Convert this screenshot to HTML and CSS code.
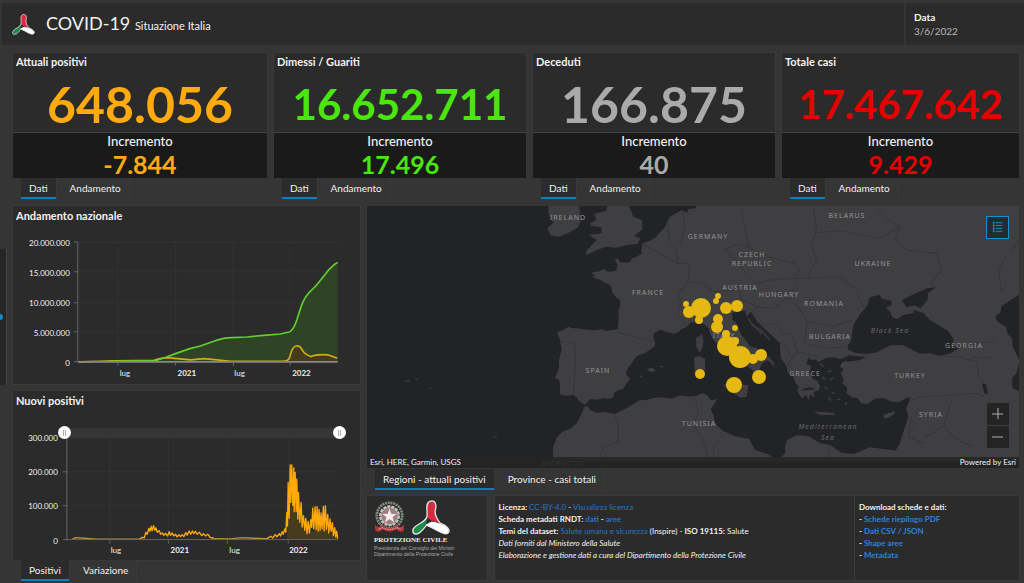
FILE: index.html
```html
<!DOCTYPE html>
<html lang="it">
<head>
<meta charset="utf-8">
<meta name="viewport" content="width=device-width, initial-scale=1">
<title>COVID-19 Situazione Italia</title>
<link rel="stylesheet" href="styles.css">
</head>
<body>
<svg class="defs" aria-hidden="true">
  <symbol id="tricolor" viewBox="0 0 114 106">
    <path d="M43 68C34 84 26 102 12 103C0 103-1 90 8 82C20 70 36 68 46 43Z" fill="#1c8a4b"/>
    <path d="M44 53C49 37 37 11 53 4C69-2 75 13 70 30C67 46 74 57 85 70L59 63Z" fill="#d62b40"/>
    <path d="M58 66C72 66 91 72 104 82C117 92 111 104 98 102C83 99 70 90 40 75Z" fill="#fff"/>
    <path d="M44 53C49 37 37 11 53 4C69-2 75 13 70 30C67 46 74 57 85 70C93 73 102 78 107 84C117 94 110 104 98 102C83 99 71 87 43 76C34 88 25 102 12 103C0 103-1 90 8 82C20 70 36 69 44 53Z" fill="none" stroke="#e4e4e4" stroke-width="4"/>
  </symbol>
</svg>

<header class="topbar">
  <div class="brand">
    <svg class="brand-logo" aria-hidden="true"><use href="#tricolor"/></svg>
    <h1 class="brand-title">COVID-19 <span class="brand-sub">Situazione Italia</span></h1>
  </div>
  <div class="date"><span class="date-label">Data</span><span class="date-value">3/6/2022</span></div>
</header>

<button class="drawer" type="button" aria-label="Apri pannello"></button>

<main class="page">
  <div class="stats">
    <section class="stat orange">
      <div class="stat-main"><h2 class="title">Attuali positivi</h2><p class="total size-l">648.056</p></div>
      <div class="stat-delta"><p class="delta-label">Incremento</p><p class="delta">-7.844</p></div>
      <div class="tabs"><button class="tab active" type="button">Dati</button><button class="tab" type="button">Andamento</button></div>
    </section>
    <section class="stat green">
      <div class="stat-main"><h2 class="title">Dimessi / Guariti</h2><p class="total size-m">16.652.711</p></div>
      <div class="stat-delta"><p class="delta-label">Incremento</p><p class="delta">17.496</p></div>
      <div class="tabs"><button class="tab active" type="button">Dati</button><button class="tab" type="button">Andamento</button></div>
    </section>
    <section class="stat gray">
      <div class="stat-main"><h2 class="title">Deceduti</h2><p class="total size-l">166.875</p></div>
      <div class="stat-delta"><p class="delta-label">Incremento</p><p class="delta">40</p></div>
      <div class="tabs"><button class="tab active" type="button">Dati</button><button class="tab" type="button">Andamento</button></div>
    </section>
    <section class="stat red">
      <div class="stat-main"><h2 class="title">Totale casi</h2><p class="total size-s">17.467.642</p></div>
      <div class="stat-delta"><p class="delta-label">Incremento</p><p class="delta">9.429</p></div>
      <div class="tabs"><button class="tab active" type="button">Dati</button><button class="tab" type="button">Andamento</button></div>
    </section>
  </div>

  <div class="content">
    <div class="charts">
      <section class="panel">
        <h2 class="title">Andamento nazionale</h2>
        <svg class="chart" viewBox="12 221 348 162" role="img" aria-label="Andamento nazionale">
          <path class="grid" d="M78 241H338M78 271H338M78 302H338M78 331H338M117 241V361M175 241V361M233 241V361M290 241V361"/>
          <g transform="translate(0 200) scale(.3333)">
            <path class="area-green" d="M232 484L465 480L490 472L525 459L568 444L600 436L640 422L685 412L740 409L790 404L840 400L868 394Q880 388 890 358Q900 325 908 304Q920 280 932 270Q945 260 960 240L985 208L1004 190L1013 185V484Z"/>
            <path class="area-orange" d="M845 482L866 474Q876 437 888 436Q900 434 906 448Q914 462 933 468Q950 460 985 463L1012 473V484Z"/>
            <path class="line-orange" d="M232 484L300 482L345 481L460 479Q485 471 500 471L570 478L610 474L650 478L690 482H845Q863 483 868 472Q876 437 888 436Q900 434 906 448Q914 462 933 468Q950 460 985 463L1012 473"/>
            <path class="line-green" d="M325 482L465 480L490 472L525 459L568 444L600 436L640 422Q665 412 695 411L740 409L790 404L840 400L868 394Q880 388 890 358Q900 325 908 304Q920 280 932 270Q945 260 960 240L985 208L1004 190L1013 185"/>
            <path class="line-gray" d="M232 484H1013"/>
          </g>
          <path class="axis" d="M77 241V362M73 241H77M73 271H77M73 302H77M73 331H77M73 361H78M117 362V365M175 362V365M233 362V365M290 362V365"/>
          <g class="ticks y"><text x="69" y="245">20.000.000</text><text x="69" y="275">15.000.000</text><text x="69" y="305">10.000.000</text><text x="69" y="335">5.000.000</text><text x="69" y="365">0</text></g>
          <g class="ticks"><text x="119" y="375">lug</text><text class="year" x="177" y="375">2021</text><text x="234" y="375">lug</text><text class="year" x="292" y="375">2022</text></g>
        </svg>
      </section>
      <section class="chart-group">
        <div class="panel">
          <h2 class="title">Nuovi positivi</h2>
          <div class="zoomable">
            <svg class="chart" viewBox="12 406 348 154" role="img" aria-label="Nuovi positivi">
              <path class="grid" d="M66 437H338M66 471H338M66 505H338M109 437V539M168 437V539M227 437V539M288 437V539"/>
              <g transform="translate(0 385) scale(.3333)">
                <path class="area-orange" d="M860 462L868 355L880 370L900 400L930 440L970 430L1013 456V462Z"/>
                <path class="line-orange soft" d="M215 460L225 456L250 458L285 461H420M640 459L690 460L725 456L760 458L800 459"/>
                <path class="line-orange" d="M418 460L426 455L431 457L436 440L440 446L445 428L448 437L452 422L455 435L459 420L463 434L466 427L470 440L476 435L480 446L485 442L490 449L495 443L501 451L506 438L510 449L515 442L520 451L525 446L530 454L535 447L540 453L545 447L550 453L556 441L560 449L566 436L571 446L576 436L580 444L585 437L590 446L597 440L604 450L609 444L615 451L622 446L629 455L640 458M800 459L812 452L818 457L825 447L830 454L837 444L841 451L846 438L849 446L854 430L857 439L860 380L862 421L864 290L867 398L870 237L872 350L875 237L878 360L881 246L882 378L885 260L888 378L890 280L893 400L895 320L899 410L903 350L906 424L910 390L914 434L917 398L921 444L924 407L928 442L932 402L935 425L938 367L941 430L945 363L948 432L951 363L954 437L957 371L960 434L963 382L966 430L970 362L972 436L976 360L979 432L983 386L986 442L990 400L993 437L997 411L1000 450L1004 426L1007 454L1010 437L1013 459"/>
              </g>
              <path class="axis" d="M66 437V540M62 471H66M62 505H66M62 539H338M109 540V543M168 540V543M227 540V543M288 540V543"/>
              <g class="ticks y"><text x="57" y="440">300.000</text><text x="57" y="474">200.000</text><text x="57" y="508">100.000</text><text x="57" y="543">0</text></g>
              <g class="ticks"><text x="110" y="552">lug</text><text class="year" x="170" y="552">2021</text><text x="229" y="552">lug</text><text class="year" x="289" y="552">2022</text></g>
            </svg>
            <div class="range">
              <input type="range" min="0" max="100" value="0" aria-label="Inizio intervallo">
              <input type="range" min="0" max="100" value="100" aria-label="Fine intervallo">
            </div>
          </div>
        </div>
        <div class="tabs"><button class="tab active" type="button">Positivi</button><button class="tab" type="button">Variazione</button></div>
      </section>
    </div>

    <div class="side">
      <section class="map-group">
        <div class="map">
          <svg class="map-art" viewBox="367 206 652 262" preserveAspectRatio="xMidYMid slice" role="img" aria-label="Mappa regioni">
            <g transform="translate(360 200) scale(.3333)">
              <path class="land" d="M1010 10L1008 24L985 26L982 38L965 31L940 44L930 50L920 68L915 82L895 102L885 115L870 122L848 130L844 150L846 160L830 171L817 174L810 187L785 188L778 184L776 176L764 178L772 194L769 212L752 215L738 213L735 206L718 214L697 217L700 224L708 226L697 232L722 240L730 246L746 252L755 262L756 276L770 294L780 300L781 315L775 330L776 360L773 388L740 393L726 388L706 391L690 390L650 385L639 385L625 380L612 389L592 397L600 420L605 448L596 485L598 500L585 535L597 539L600 548L600 583L616 587L640 585L648 590L660 605L676 614L690 597L710 599L730 595L748 596L760 592L762 580L775 570L790 567L800 550L811 537L798 522L802 508L822 480L831 467L855 459L883 440L886 428L880 412L882 400L900 389L920 396L940 401L955 397L962 389L980 380L990 369L1005 366L1017 363L1036 376L1046 385L1051 402L1058 416L1075 435L1089 450L1110 470L1135 481L1154 491L1166 502L1178 511L1187 531L1184 546L1194 549L1207 536L1208 520L1198 508L1206 491L1222 480L1240 496L1244 503L1243 489L1226 470L1202 454L1188 444L1172 440L1148 410L1138 391L1130 370L1118 360L1116 340L1135 334L1155 333L1161 350L1172 335L1178 343L1192 365L1218 390L1240 411L1260 430L1262 473L1280 500L1283 517L1300 530L1306 548L1316 560L1312 572L1325 595L1338 586L1346 600L1350 584L1365 592L1360 577L1376 571L1381 558L1372 546L1358 536L1349 518L1354 497L1340 493L1343 480L1368 478L1374 487L1400 473L1423 472L1440 478L1460 470L1482 480L1467 477L1445 489L1440 500L1450 506L1443 520L1452 540L1447 550L1462 564L1460 578L1475 592L1492 594L1505 610L1522 613L1545 596L1570 594L1592 604L1617 607L1639 594L1653 592L1639 625L1645 650L1629 700L1618 735L1606 752L1572 747L1530 742L1482 762L1445 758L1412 736L1380 729L1345 708L1312 706L1282 719L1275 738L1276 760L1260 775L1242 774L1224 762L1185 750L1167 716L1124 709L1088 692L1070 676L1063 660L1062 648L1052 628L1066 607L1070 597L1053 601L1040 584L1024 580L1012 587L990 590L960 586L935 596L905 592L885 593L857 600L838 601L800 625L780 634L766 642L732 636L710 639L690 630L683 617L674 620L660 650L650 670L634 684L606 696L590 713L580 740L578 785H2000V0Z"/>
              <path class="land" d="M565 10L566 45L580 69L562 85L572 106L595 111L625 99L655 82L662 62L657 10ZM744 10L738 32L702 42L710 60L691 70L692 78L725 82L724 100L686 104L710 120L678 154L679 166L710 150L738 140L768 143L800 135L832 132L842 115L822 107L848 88L846 60L820 50L804 10ZM1026 403L1031 420L1028 442L1019 458L1009 439L1008 415ZM1002 474L1018 468L1035 476L1036 510L1005 520ZM1090 554L1112 548L1165 556L1160 590L1142 593L1110 574ZM860 509L875 502L887 511L875 517ZM898 497L911 498L906 503ZM837 529L849 526L843 533ZM1361 634L1380 636L1423 639L1425 645L1380 645ZM1570 645L1602 634L1606 640L1586 654L1572 655ZM130 542L150 541L147 546L136 545ZM164 536L175 536L172 541ZM203 564L215 563L212 568ZM400 708L413 711L408 714Z"/>
              <path class="sea" d="M1462 440L1474 420L1480 375L1502 340L1521 318L1530 292L1560 284L1565 296L1594 302L1595 315L1577 325L1590 333L1596 350L1612 358L1630 344L1660 340L1662 330L1692 340L1709 360L1762 391L1780 415L1780 437L1800 443L1771 460L1740 468L1710 460L1680 461L1630 436L1592 436L1550 457L1520 462L1487 459L1466 450ZM1626 300L1650 288L1702 265L1728 261L1704 280L1703 299L1682 325L1664 316L1639 322ZM1977 284L1924 319L1922 337L1905 350L1912 364L1938 382L1943 402L1957 415L1958 438L1977 480H2000V284ZM1977 492L1969 520L1956 535L1958 565L1977 573H2000V492ZM1449 478L1466 466L1518 471L1500 480L1462 485ZM1866 552L1878 552L1884 579L1874 582ZM972 10H1008V24L988 26H972Z"/>
              <path class="sea" d="M1341 478L1352 470L1348 482ZM1372 490L1385 493L1380 505ZM1325 572L1345 570L1368 568L1352 562L1334 565Z"/>
              <path class="islands" d="M1380 490L1391 501M1402 516L1414 512M1410 540L1420 532M1393 560L1404 568M1415 578L1425 580M1430 600L1442 597M1405 593L1414 602M1386 531L1398 538M1363 538L1373 548M1455 614L1462 607M1165 356L1180 379L1202 389L1230 420M1178 372L1205 402"/>
              <path class="border" d="M770 396L820 410L885 425M603 423L645 430L646 500L640 585M850 134L900 160L950 190L988 191L985 245L955 280L965 310L950 340L982 379M920 70L930 130L950 150L952 190M970 38L975 90L960 130M988 245L1030 250L1060 275L1140 268M1095 145L1140 132L1210 160L1225 170L1302 190L1320 210L1300 235L1235 240L1190 250L1150 210ZM1142 20L1150 60L1160 110L1168 138M1360 20L1370 80L1355 140L1370 180L1342 235L1300 236M1365 98L1450 92L1500 105L1560 115L1620 82L1605 120L1640 150L1730 160L1748 210L1715 245L1716 263M1545 20L1585 60L1620 82M1140 268L1142 295L1190 320L1240 325L1285 290L1310 250M1190 320L1180 335L1215 375L1250 370L1265 400L1298 405M1342 235L1440 230L1490 270L1510 320M1285 290L1315 320L1340 365L1420 378L1478 360M1340 365L1335 430L1400 445L1460 440M1298 405L1310 455L1280 500M1310 455L1370 468M1653 600L1690 590L1780 585L1850 580L1872 590M1740 468L1790 470L1850 485L1856 530L1872 552M1800 443L1850 430L1905 425M1840 470L1870 475L1890 470M1655 650L1645 710L1690 730M1690 715L1750 680L1775 600M1750 680L1800 725L1840 740M1645 660L1665 680L1650 700M1940 165L1915 210L1925 275M1977 120L1955 155M765 645L775 690L775 728L730 740L720 775M1005 590L1015 640L1000 675L1030 720L1045 775M1060 780L1062 735L1090 705M1405 735L1410 780M1262 430L1280 440L1290 465"/>
            </g>
            <g class="places"><text x="724" y="338">ITALY</text><text x="563" y="466">MOROCCO</text></g>
            <g class="bubbles">
              <circle cx="686" cy="304" r="3"/><circle cx="689" cy="312" r="6"/><circle cx="701" cy="308" r="10"/><circle cx="699" cy="320" r="4"/><circle cx="718" cy="296" r="3"/><circle cx="716" cy="301" r="3"/><circle cx="726" cy="308" r="6"/><circle cx="737" cy="306" r="6"/><circle cx="718" cy="319" r="5"/><circle cx="717" cy="327" r="6"/><circle cx="735" cy="328" r="3"/><circle cx="726" cy="334" r="4"/><circle cx="727" cy="346" r="10"/><circle cx="735" cy="341" r="4"/><circle cx="740" cy="357" r="11"/><circle cx="753" cy="359" r="5"/><circle cx="761" cy="355" r="6"/><circle cx="759" cy="377" r="7"/><circle cx="700" cy="374" r="5"/><circle cx="734" cy="385" r="8"/>
            </g>
            <g class="places">
              <text x="568" y="220">IRELAND</text><text x="708" y="239">GERMANY</text><text x="847" y="218">BELARUS</text><text x="752" y="257">CZECH</text><text x="752" y="266">REPUBLIC</text><text x="873" y="266">UKRAINE</text><text x="648" y="295">FRANCE</text><text x="740" y="290">AUSTRIA</text><text x="779" y="297">HUNGARY</text><text x="824" y="306">ROMANIA</text><text x="830" y="339">BULGARIA</text><text x="964" y="348">GEORGIA</text><text x="598" y="373">SPAIN</text><text x="805" y="376">GREECE</text><text x="910" y="378">TURKEY</text><text x="931" y="417">SYRIA</text><text x="699" y="426">TUNISIA</text>
              <text class="water" x="890" y="333">Black Sea</text><text class="water" x="828" y="429">Mediterranean</text><text class="water" x="828" y="440">Sea</text>
            </g>
          </svg>
          <button class="legend" type="button" aria-label="Legenda">
            <svg viewBox="0 0 22 22" aria-hidden="true"><path d="M7 5V16M9 6H16M9 9H16M9 12H16M9 15H16M6 6H8M6 9H8M6 12H8M6 15H8"/></svg>
          </button>
          <div class="zoom"><button type="button" aria-label="Ingrandisci"><svg viewBox="0 0 22 22" aria-hidden="true"><path d="M5 11H16M11 5V16"/></svg></button><button type="button" aria-label="Riduci"><svg viewBox="0 0 22 22" aria-hidden="true"><path d="M5 11H16"/></svg></button></div>
          <div class="credits"><span>Esri, HERE, Garmin, USGS</span><span>Powered by Esri</span></div>
        </div>
        <div class="tabs map-tabs"><button class="tab active" type="button">Regioni - attuali positivi</button><button class="tab" type="button">Province - casi totali</button></div>
      </section>

      <footer class="footer">
        <div class="panel logo-box">
          <div class="logos">
            <svg class="emblem" viewBox="0 0 90 96" aria-hidden="true">
              <circle cx="45" cy="45" r="37" fill="none" stroke="#7f8a7e" stroke-width="8" stroke-dasharray="6 2"/>
              <circle cx="45" cy="46" r="27" fill="#8d8684" stroke="#c9c6c1" stroke-width="7" stroke-dasharray="9 3"/>
              <path d="M45 22L51 39L69 39L55 50L61 68L45 57L29 68L35 50L21 39L39 39Z" fill="#f0eded" stroke="#c0606a" stroke-width="2"/>
              <path d="M2 72Q14 84 24 74Q45 89 66 74Q76 84 88 72L86 90Q73 96 65 86Q45 98 25 86Q17 96 4 90Z" fill="#b8353c"/>
              <path d="M14 85L24 80Q45 91 66 80L77 85" fill="none" stroke="#e3b7b4" stroke-width="3" stroke-dasharray="3 2"/>
            </svg>
            <svg class="pc-mark" aria-hidden="true"><use href="#tricolor"/></svg>
          </div>
          <p class="pc-name">PROTEZIONE CIVILE</p>
          <p class="pc-sub">Presidenza del Consiglio dei Ministri</p>
          <p class="pc-sub">Dipartimento della Protezione Civile</p>
        </div>
        <div class="panel notes">
          <p><b>Licenza:</b> <a href="#licenza">CC-BY-4.0</a> - <a href="#visualizza">Visualizza licenza</a></p>
          <p><b>Scheda metadati RNDT: <a href="#dati">dati</a> - <a href="#aree">aree</a></b></p>
          <p><b>Temi del dataset:</b> <a href="#temi">Salute umana e sicurezza</a> (Inspire) - <b>ISO 19115:</b> Salute</p>
          <p><i>Dati forniti dal Ministero della Salute</i></p>
          <p><i>Elaborazione e gestione dati a cura del Dipartimento della Protezione Civile</i></p>
        </div>
        <div class="panel notes downloads">
          <p>Download schede e dati:</p>
          <p>- <a href="#pdf">Schede riepilogo PDF</a></p>
          <p>- <a href="#csv">Dati CSV / JSON</a></p>
          <p>- <a href="#shape">Shape aree</a></p>
          <p>- <a href="#metadata">Metadata</a></p>
        </div>
      </footer>
    </div>
  </div>
</main>
</body>
</html>
```

FILE: styles.css
```css
* { box-sizing: border-box; }

body {
  margin: 0;
  min-height: 100vh;
  display: flex;
  flex-direction: column;
  background: #353535;
  color: #f2f2f2;
  font-family: Lato, "Open Sans", sans-serif;
  font-size: 10px;
  line-height: 12px;
}

h1, h2, p { margin: 0; }
button { font: inherit; color: inherit; border: 0; padding: 0; }
a { color: #2c74c4; text-decoration: none; }
svg { display: block; }
.defs { position: absolute; width: 0; height: 0; }

.topbar {
  display: flex;
  min-height: 42px;
  margin: 3px 0 0 2px;
  background: #2b2b2b;
}
.brand { flex: 1; display: flex; align-items: center; gap: 11px; padding-left: 10px; }
.brand-logo { width: 23px; height: 21px; }
.brand-title { font-size: 18px; line-height: 24px; font-weight: 400; }
.brand-sub { font-size: 11px; }
.date {
  display: flex;
  flex-direction: column;
  gap: 2px;
  width: 120px;
  padding: 8px 8px 0;
  border-left: 2px solid #353535;
}
.date-label { font-weight: 700; }
.date-value { color: #b5b5b5; }

.drawer {
  position: absolute;
  left: 0;
  top: 249px;
  width: 7px;
  height: 136px;
  background: #262626;
  border-right: 1px solid #414141;
}
.drawer::before {
  content: "";
  display: block;
  width: 3px;
  height: 6px;
  border-radius: 0 3px 3px 0;
  background: #0d8bc9;
}

.page {
  flex: 1;
  display: flex;
  flex-direction: column;
  gap: 7px;
  padding: 8px 5px 1px 13px;
}
.panel { background: #2b2b2b; box-shadow: 0 0 0 1px #3a3a3a; }
.title { padding: 4px 3px 0; font-size: 11px; line-height: 12px; font-weight: 700; }

.stats {
  display: grid;
  grid-template-columns: minmax(0, 254fr) minmax(0, 252fr) minmax(0, 242fr) minmax(0, 237fr);
  gap: 7px;
}
.stat-main { height: 80px; background: #2b2b2b; border-bottom: 1px solid #444; box-shadow: 0 0 0 1px #3a3a3a; }
.stat-main .title { padding-top: 3px; }
.total { display: flex; align-items: center; justify-content: center; height: 64px; padding-top: 8px; font-weight: 700; }
.size-l { font-size: 50px; }
.size-m { font-size: 42px; }
.size-s { font-size: 40px; }
.stat-delta { height: 45px; padding-top: 1px; background: #1a1a1a; text-align: center; }
.delta-label { font-size: 13px; line-height: 15px; font-weight: 500; }
.delta { font-size: 25px; line-height: 30px; font-weight: 700; }
.orange .total, .orange .delta { color: #ffaa0e; }
.green .total, .green .delta { color: #4ce60f; }
.gray .total, .gray .delta { color: #aaa; }
.red .total, .red .delta { color: #e60000; }

.tabs { display: flex; gap: 6px; padding-left: 8px; }
.tab {
  height: 21px;
  padding: 0 8px;
  background: #353535;
  border-bottom: 2px solid transparent;
  box-shadow: 1px 0 0 #3a3a3a;
}
.tab.active { background: #2b2b2b; border-bottom-color: #0a7fbd; }

.content {
  flex: 1;
  display: grid;
  grid-template-columns: minmax(0, 347fr) minmax(0, 652fr);
  gap: 7px;
}
.charts, .side { display: flex; flex-direction: column; gap: 7px; }
.chart { width: 100%; height: auto; }
.zoomable { position: relative; }
.grid { fill: none; stroke: #323232; }
.axis { fill: none; stroke: #666; }
.ticks { fill: #f0f0f0; font-size: 8px; }
.y { text-anchor: end; }
.year { font-weight: 700; }
.area-green { fill: #2f4326; }
.area-orange { fill: #453c1f; }
.line-green, .line-orange, .line-gray { fill: none; stroke-width: 5; stroke-linejoin: round; }
.line-green { stroke: #61cf2c; }
.line-orange { stroke: #d2ab17; }
.line-gray { stroke: #888; }
.zoomable .line-orange { stroke: #ffa90b; stroke-width: 4; }
.zoomable .soft { stroke: #b9913d; }

.range {
  position: absolute;
  top: 19px;
  left: 13%;
  right: 4%;
  height: 14px;
  padding: 0 2px;
  background: linear-gradient(#353535, #353535) center / 100% 10px no-repeat;
}
.range input {
  position: absolute;
  inset: 0;
  width: 100%;
  height: 14px;
  margin: 0;
  appearance: none;
  background: transparent;
  pointer-events: none;
}
.range input::-webkit-slider-thumb {
  appearance: none;
  width: 13px;
  height: 13px;
  border-radius: 50%;
  background: linear-gradient(90deg, #aaa 1px, transparent 1px 2px, #aaa 2px) center / 3px 6px no-repeat, #fff;
  pointer-events: auto;
}

.side { gap: 6px; padding-bottom: 2px; }
.map-group { flex: 1; display: flex; flex-direction: column; }
.map { position: relative; flex: 1; min-height: 260px; overflow: hidden; background: #222326; }
.map-art { position: absolute; inset: 0; width: 100%; height: 100%; }
.land { fill: #3f3f41; }
.sea { fill: #222326; }
.border { fill: none; stroke: #353537; stroke-width: 3; stroke-linejoin: round; }
.islands { fill: none; stroke: #3a3a3c; stroke-width: 5; }
.bubbles { fill: #e6b813; }
.places { fill: #949496; font-family: "Noto Sans", sans-serif; font-size: 7px; letter-spacing: 1px; text-anchor: middle; }
.water { fill: #66676a; font-style: italic; }
.legend {
  position: absolute;
  top: 10px;
  right: 10px;
  width: 23px;
  height: 23px;
  background: #222c34;
  border: 1px solid #138fc9;
}
.legend path { fill: none; stroke: #168fc9; }
.zoom { position: absolute; right: 10px; bottom: 20px; display: grid; gap: 1px; }
.zoom button { width: 22px; height: 22px; background: #242424; }
.zoom path { fill: none; stroke: #b0b0b0; }
.credits {
  position: absolute;
  left: 0;
  right: 0;
  bottom: 0;
  display: flex;
  justify-content: space-between;
  padding: 0 3px;
  background: rgba(36, 36, 36, .85);
  font-size: 8px;
  line-height: 11px;
}
.map-tabs { padding-top: 1px; }

.footer {
  display: grid;
  grid-template-columns: minmax(0, 119fr) minmax(0, 361fr) minmax(0, 162fr);
  column-gap: 1px;
  min-height: 84px;
}
.logo-box { padding: 4px 7px; }
.logos { display: flex; gap: 7px; width: 76px; height: 36px; }
.emblem { width: 31px; height: 33px; }
.pc-mark { width: 38px; height: 35px; }
.pc-name { font-family: "Liberation Serif", serif; font-size: 7px; line-height: 9px; font-weight: 700; white-space: nowrap; }
.pc-sub { color: #aaa; font-family: "Liberation Sans Narrow", "Liberation Sans", sans-serif; font-size: 5px; line-height: 6px; white-space: nowrap; }
.notes { padding: 5px 4px; font-size: 8px; }
.notes:not(.downloads) { margin-left: 7px; padding-left: 3px; }
.downloads { font-weight: 700; }
.downloads a { color: #2a82dc; }
```
